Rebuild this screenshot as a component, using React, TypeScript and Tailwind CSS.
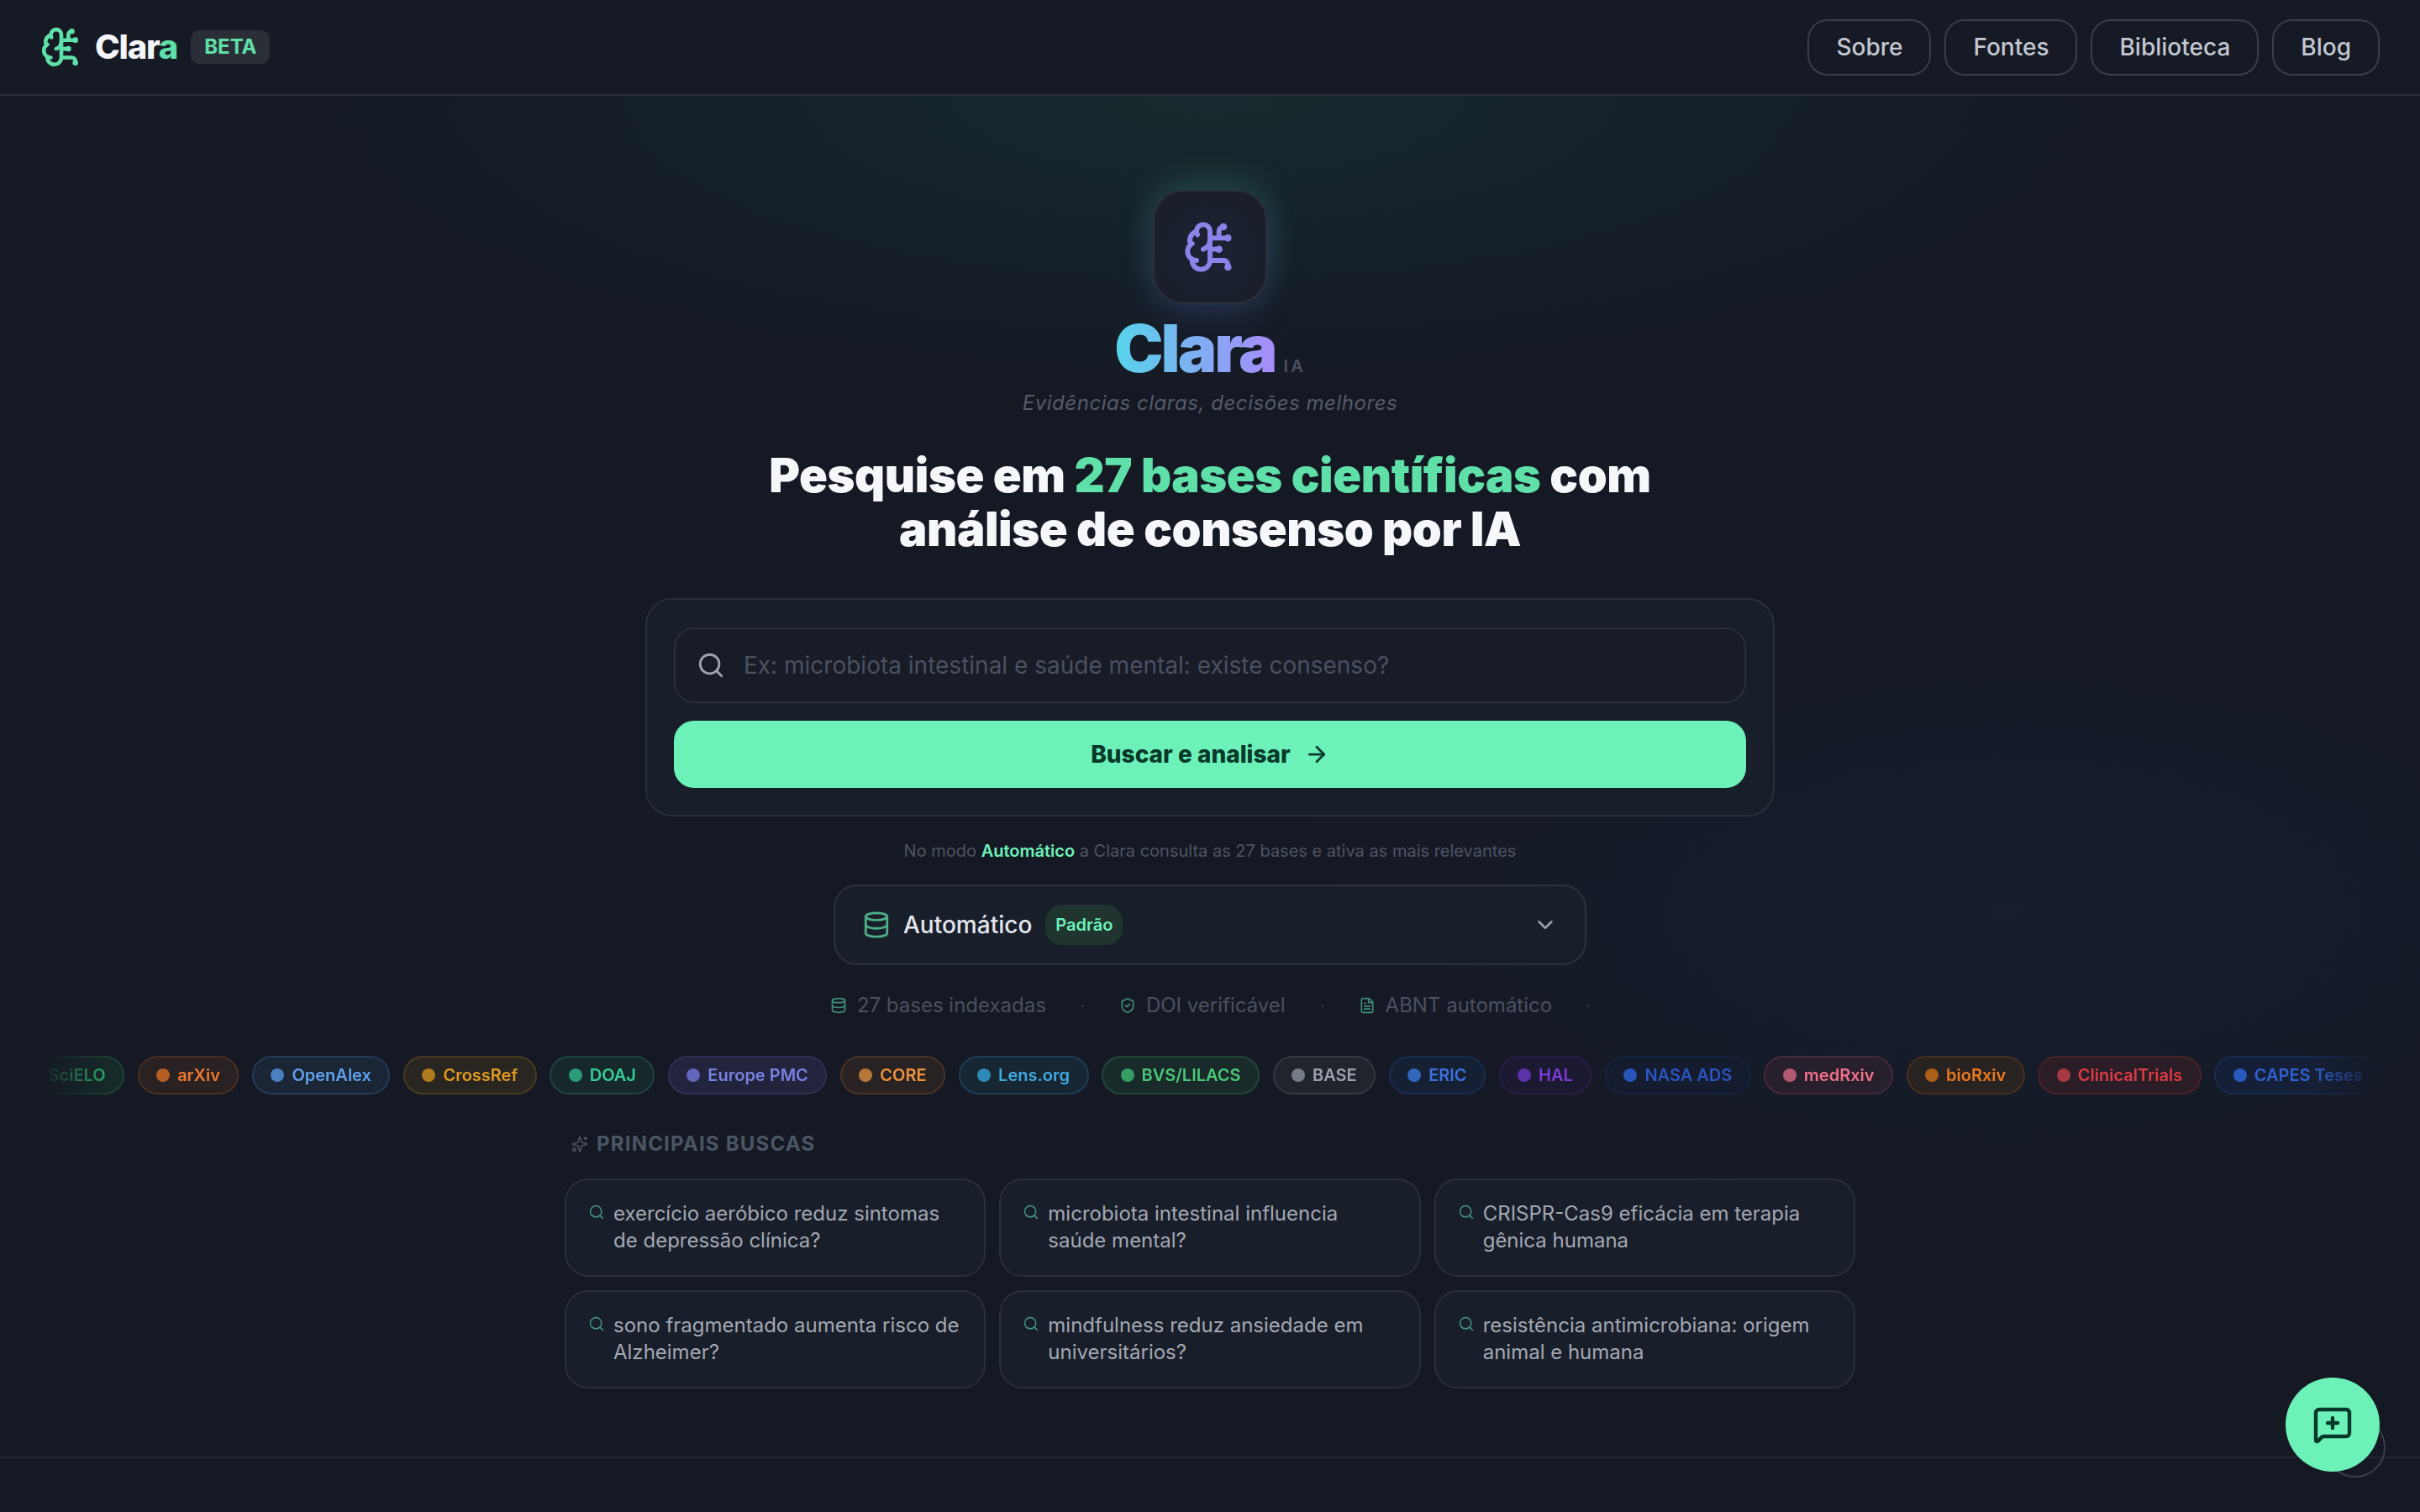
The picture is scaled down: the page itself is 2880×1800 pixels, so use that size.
import {
  ArrowRight,
  BrainCircuit,
  ChevronDown,
  Database,
  FileText,
  MessageSquarePlus,
  Search,
  ShieldCheck,
  Sparkles,
} from "lucide-react";

const navLinks = ["Sobre", "Fontes", "Biblioteca", "Blog"];

const sources = [
  { name: "SciELO", chip: "border-[#1d4235] bg-[#172a2a] text-[#2fae6c]", dot: "bg-[#2a9560]" },
  { name: "arXiv", chip: "border-[#4a2f22] bg-[#2a2123] text-[#ea7a30]", dot: "bg-[#b45f24]" },
  { name: "OpenAlex", chip: "border-[#253a58] bg-[#1a2535] text-[#60a0ec]", dot: "bg-[#4a7fc0]" },
  { name: "CrossRef", chip: "border-[#4a3a1f] bg-[#292621] text-[#e09a20]", dot: "bg-[#b07a1e]" },
  { name: "DOAJ", chip: "border-[#1f4440] bg-[#17282b] text-[#34cf98]", dot: "bg-[#2a9c78]" },
  { name: "Europe PMC", chip: "border-[#2e3154] bg-[#21243c] text-[#7a80e0]", dot: "bg-[#6366b8]" },
  { name: "CORE", chip: "border-[#4a3226] bg-[#282322] text-[#f0923c]", dot: "bg-[#b5763a]" },
  { name: "Lens.org", chip: "border-[#1e3d55] bg-[#172633] text-[#3fa9e0]", dot: "bg-[#2e8ab8]" },
  { name: "BVS/LILACS", chip: "border-[#22473a] bg-[#182a2a] text-[#4ac878]", dot: "bg-[#379e63]" },
  { name: "BASE", chip: "border-[#33373f] bg-[#20242c] text-[#9ca3af]", dot: "bg-[#757c88]" },
  { name: "ERIC", chip: "border-[#1a2c50] bg-[#152034] text-[#3b72e0]", dot: "bg-[#3167bd]" },
  { name: "HAL", chip: "border-[#271f48] bg-[#1c1932] text-[#7a3dd8]", dot: "bg-[#5d32a8]" },
  { name: "NASA ADS", chip: "border-[#18233f] bg-[#151c30] text-[#2a55c0]", dot: "bg-[#2a55b8]" },
  { name: "medRxiv", chip: "border-[#45293a] bg-[#281f2c] text-[#f0708a]", dot: "bg-[#b05a72]" },
  { name: "bioRxiv", chip: "border-[#47301f] bg-[#282220] text-[#ea7a1e]", dot: "bg-[#aa6018]" },
  { name: "ClinicalTrials", chip: "border-[#4a2228] bg-[#2a1d26] text-[#dc3c44]", dot: "bg-[#a63a42]" },
  { name: "CAPES Teses", chip: "border-[#1a2b50] bg-[#152038] text-[#2f62d0]", dot: "bg-[#2a5ac0]" },
];

const topSearches = [
  "exercício aeróbico reduz sintomas de depressão clínica?",
  "microbiota intestinal influencia saúde mental?",
  "CRISPR-Cas9 eficácia em terapia gênica humana",
  "sono fragmentado aumenta risco de Alzheimer?",
  "mindfulness reduz ansiedade em universitários?",
  "resistência antimicrobiana: origem animal e humana",
];

function Header() {
  return (
    <header className="flex h-[114px] items-center justify-between border-b-2 border-[#2b2f3a] bg-[#161a25] px-[48px]">
      <div className="flex items-center">
        <BrainCircuit size={50} strokeWidth={2.2} className="text-[#5fe0a8]" />
        <span className="ml-[15px] text-[40px] font-extrabold tracking-[-1.2px] text-[#f3f5f9]">
          Clar<span className="text-[#5fe0a8]">a</span>
        </span>
        <span className="ml-[16px] rounded-[10px] bg-[#2a2e37] px-[16px] py-[5px] text-[24px] leading-[30px] font-bold text-[#5fe0a8]">
          BETA
        </span>
      </div>
      <nav className="flex gap-[16px]">
        {navLinks.map((link) => (
          <a
            key={link}
            className="flex h-[67px] items-center rounded-[24px] border-2 border-[#3a3e49] px-[32px] text-[28px] font-medium text-[#c3c7d1]"
          >
            {link}
          </a>
        ))}
      </nav>
    </header>
  );
}

function Hero() {
  return (
    <div className="flex flex-col items-center">
      <div className="mt-[112px] flex h-[136px] w-[136px] items-center justify-center rounded-[36px] border-2 border-[#2b303c] bg-[radial-gradient(circle_at_50%_55%,#1e2236,#1a1f2b_70%)] shadow-[0_-12px_40px_rgba(60,200,150,0.2),0_12px_40px_rgba(110,90,240,0.18)]">
        <BrainCircuit size={64} strokeWidth={2.2} className="text-[#8a84ea]" />
      </div>
      <div className="mt-[7px] flex items-end">
        <h1 className="bg-[linear-gradient(90deg,#56d4ea,#a78bfa)] bg-clip-text text-[78px] leading-[92px] font-black tracking-[-3px] text-transparent">
          Clara
        </h1>
        <span className="mb-[15px] ml-[10px] text-[20px] leading-[20px] font-semibold tracking-[3px] text-[#4b5060]">
          IA
        </span>
      </div>
      <p className="mt-[2px] text-[24px] leading-[34px] tracking-[0.55px] text-[#565b69] italic">
        Evidências claras, decisões melhores
      </p>
      <h2 className="mt-[37px] w-[1200px] text-center text-[56px] leading-[64px] font-black tracking-[-0.4px] text-[#f6f7fa]">
        Pesquise em <span className="text-[#5fe0a8]">27 bases científicas</span> com
        <br />
        análise de consenso por IA
      </h2>
    </div>
  );
}

function SearchCard() {
  return (
    <div className="mx-auto mt-[50px] w-[1344px] rounded-[32px] border-2 border-[#2a2f3a] bg-[#191f2a] px-[32px] pt-[33px] pb-[32px]">
      <div className="flex h-[90px] items-center rounded-[24px] border-2 border-[#2a2f3a] bg-[#171c27] pl-[25px]">
        <Search size={34} strokeWidth={2} className="shrink-0 text-[#9ca3af]" />
        <input
          readOnly
          placeholder="Ex: microbiota intestinal e saúde mental: existe consenso?"
          className="ml-[22px] w-full bg-transparent text-[28px] text-white outline-none placeholder:text-[#4b5060]"
        />
      </div>
      <button className="mt-[21px] flex h-[80px] w-full items-center justify-center gap-[16px] rounded-[24px] bg-[#6cf2b9] text-[28px] font-extrabold text-[#06392a]">
        Buscar e analisar
        <ArrowRight size={30} strokeWidth={2.2} />
      </button>
    </div>
  );
}

function ModeSelect() {
  return (
    <div className="flex flex-col items-center">
      <p className="mt-[26px] text-[20px] leading-[30px] text-[#4f5462]">
        No modo <span className="font-semibold text-[#6cf2b9]">Automático</span> a Clara consulta as 27 bases e ativa as
        mais relevantes
      </p>
      <div className="mt-[25px] flex h-[96px] w-[896px] items-center rounded-[28px] border-2 border-[#2d323d] bg-[#191f2a] px-[32px]">
        <Database size={34} strokeWidth={2} className="text-[#4fae88]" />
        <span className="ml-[15px] text-[28px] font-medium text-[#e3e6ec]">Automático</span>
        <span className="ml-[16px] flex h-[48px] items-center rounded-[20px] bg-[#20352f] px-[12px] text-[20px] font-semibold text-[#6cf2b9]">
          Padrão
        </span>
        <ChevronDown size={30} strokeWidth={2} className="ml-auto text-[#9ca3af]" />
      </div>
      <div className="mt-[28px] flex h-[40px] items-center gap-[42px] text-[24px] text-[#4b5060]">
        <Stat icon={<Database size={20} strokeWidth={2} />} label="27 bases indexadas" />
        <Dot />
        <Stat icon={<ShieldCheck size={20} strokeWidth={2} />} label="DOI verificável" />
        <Dot />
        <Stat icon={<FileText size={20} strokeWidth={2} />} label="ABNT automático" />
        <Dot />
      </div>
    </div>
  );
}

function Stat({ icon, label }: { icon: React.ReactNode; label: string }) {
  return (
    <span className="flex items-center gap-[12px]">
      <span className="text-[#3f9077]">{icon}</span>
      {label}
    </span>
  );
}

function Dot() {
  return <span className="h-[3px] w-[3px] rounded-full bg-[#363a46]" />;
}

function SourceStrip() {
  return (
    <div className="mx-[48px] mt-[40px] overflow-hidden [mask-image:linear-gradient(90deg,transparent,black_3%,black_97%,transparent)]">
      <div className="-ml-[38px] flex w-max gap-[15.5px]">
        {sources.map((source) => (
          <span
            key={source.name}
            className={`flex h-[46px] items-center gap-[9px] rounded-full border-2 px-[20.5px] text-[20px] font-semibold ${source.chip}`}
          >
            <span className={`h-[16px] w-[16px] rounded-full ${source.dot}`} />
            {source.name}
          </span>
        ))}
      </div>
    </div>
  );
}

function TopSearches() {
  return (
    <section className="mx-auto mt-[44px] w-[1536px]">
      <div className="flex items-center gap-[10px] pl-[8px] text-[24px] leading-[30px] font-bold tracking-[1.2px] text-[#4b5563]">
        <Sparkles size={20} strokeWidth={1.5} className="text-[#5b6270]" />
        PRINCIPAIS BUSCAS
      </div>
      <div className="mt-[26px] grid grid-cols-3 gap-[16px]">
        {topSearches.map((query) => (
          <div
            key={query}
            className="flex h-[117px] gap-[10px] rounded-[28px] border-2 border-[#2a2f3a] bg-[#191f2a] pl-[26px] pr-[24px] pt-[24px]"
          >
            <Search size={20} strokeWidth={1.75} className="mt-[4px] shrink-0 text-[#459a80]" />
            <span className="text-[24px] leading-[32px] text-[#a3a8b3]">{query}</span>
          </div>
        ))}
      </div>
    </section>
  );
}

export default function App() {
  return (
    <div className="relative h-[1800px] overflow-hidden bg-[#151924] bg-[radial-gradient(ellipse_1150px_360px_at_1440px_114px,rgba(40,160,120,0.12),transparent),radial-gradient(ellipse_900px_400px_at_2390px_1084px,rgba(40,70,130,0.10),transparent)] font-['Inter',sans-serif]">
      <Header />
      <Hero />
      <SearchCard />
      <ModeSelect />
      <SourceStrip />
      <TopSearches />
      <div className="absolute inset-x-0 top-[1734px] border-t-2 border-[#23272f]" />
      <div className="absolute left-[2767px] top-[1687px] h-[72px] w-[72px] rounded-full border-2 border-[#3a3e49]" />
      <button className="absolute left-[2720px] top-[1640px] flex h-[112px] w-[112px] items-center justify-center rounded-full bg-[#6cf2b9] text-[#06392a]">
        <MessageSquarePlus size={48} strokeWidth={2.2} />
      </button>
    </div>
  );
}
